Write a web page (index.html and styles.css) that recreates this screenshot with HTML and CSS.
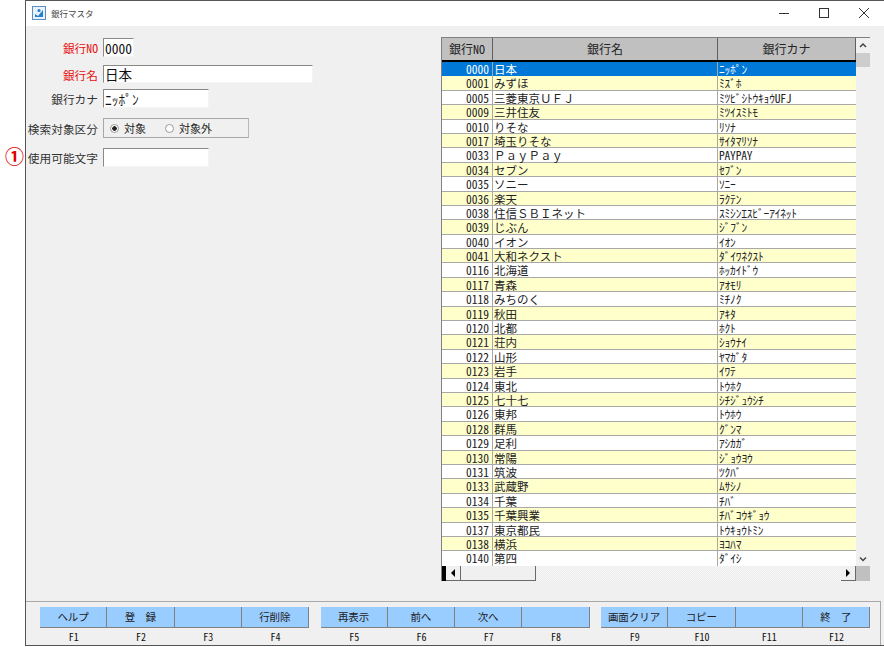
FILE: index.html
```html
<!DOCTYPE html>
<html lang="ja">
<head>
  <meta charset="UTF-8" />
  <title>銀行マスタ</title>
  <link rel="stylesheet" href="styles.css">
</head>
<body>
  <span class="note-mark">①</span>
  <div class="window">
    <header class="titlebar">
      <svg class="app-icon" width="14" height="14" viewBox="0 0 14 14">
        <rect x="0.5" y="0.5" width="13" height="13" fill="#e8f2fb" stroke="#5b8fc4"/>
        <path d="M3 8 L6 10 L11 4 L11 11 L3 11 Z" fill="#2a7fc9"/>
        <circle cx="7" cy="4.5" r="1.6" fill="#2a7fc9"/>
      </svg>
      <span class="title">銀行マスタ</span>
      <div class="controls">
        <svg width="10" height="10" viewBox="0 0 10 10"><path d="M0 5.5H10" stroke="#333" fill="none"/></svg>
        <svg width="10" height="10" viewBox="0 0 10 10"><rect x="0.5" y="0.5" width="9" height="9" stroke="#333" fill="none"/></svg>
        <svg width="10" height="10" viewBox="0 0 10 10"><path d="M0 0L10 10M10 0L0 10" stroke="#333" fill="none"/></svg>
      </div>
    </header>

    <main class="content">
      <section class="form">
        <div class="field no-row">
          <label class="required">銀行NO</label>
          <input class="input w-no" type="text" value="0000">
        </div>
        <div class="field name-row">
          <label class="required">銀行名</label>
          <input class="input w-name" type="text" value="日本">
        </div>
        <div class="field kana-row">
          <label>銀行カナ</label>
          <input class="input w-kana" type="text" value="ﾆｯﾎﾟﾝ">
        </div>
        <div class="field group-row">
          <label>検索対象区分</label>
          <div class="radio-group">
            <span class="radio checked"></span><span class="radio-text">対象</span>
            <span class="radio"></span><span class="radio-text">対象外</span>
          </div>
        </div>
        <div class="field usable-row">
          <label>使用可能文字</label>
          <input class="input w-kana" type="text" value="">
        </div>
      </section>

      <section class="grid">
        <div class="grid-top">
          <div class="grid-body">
            <div class="row head"><div>銀行NO</div><div>銀行名</div><div>銀行カナ</div></div>
            <div class="row selected"><div>0000</div><div>日本</div><div>ﾆｯﾎﾟﾝ</div></div>
            <div class="row alt"><div>0001</div><div>みずほ</div><div>ﾐｽﾞﾎ</div></div>
            <div class="row"><div>0005</div><div>三菱東京ＵＦＪ</div><div>ﾐﾂﾋﾞｼﾄｳｷｮｳUFJ</div></div>
            <div class="row alt"><div>0009</div><div>三井住友</div><div>ﾐﾂｲｽﾐﾄﾓ</div></div>
            <div class="row"><div>0010</div><div>りそな</div><div>ﾘｿﾅ</div></div>
            <div class="row alt"><div>0017</div><div>埼玉りそな</div><div>ｻｲﾀﾏﾘｿﾅ</div></div>
            <div class="row"><div>0033</div><div>ＰａｙＰａｙ</div><div>PAYPAY</div></div>
            <div class="row alt"><div>0034</div><div>セブン</div><div>ｾﾌﾞﾝ</div></div>
            <div class="row"><div>0035</div><div>ソニー</div><div>ｿﾆｰ</div></div>
            <div class="row alt"><div>0036</div><div>楽天</div><div>ﾗｸﾃﾝ</div></div>
            <div class="row"><div>0038</div><div>住信ＳＢＩネット</div><div>ｽﾐｼﾝｴｽﾋﾞｰｱｲﾈｯﾄ</div></div>
            <div class="row alt"><div>0039</div><div>じぶん</div><div>ｼﾞﾌﾞﾝ</div></div>
            <div class="row"><div>0040</div><div>イオン</div><div>ｲｵﾝ</div></div>
            <div class="row alt"><div>0041</div><div>大和ネクスト</div><div>ﾀﾞｲﾜﾈｸｽﾄ</div></div>
            <div class="row"><div>0116</div><div>北海道</div><div>ﾎｯｶｲﾄﾞｳ</div></div>
            <div class="row alt"><div>0117</div><div>青森</div><div>ｱｵﾓﾘ</div></div>
            <div class="row"><div>0118</div><div>みちのく</div><div>ﾐﾁﾉｸ</div></div>
            <div class="row alt"><div>0119</div><div>秋田</div><div>ｱｷﾀ</div></div>
            <div class="row"><div>0120</div><div>北都</div><div>ﾎｸﾄ</div></div>
            <div class="row alt"><div>0121</div><div>荘内</div><div>ｼｮｳﾅｲ</div></div>
            <div class="row"><div>0122</div><div>山形</div><div>ﾔﾏｶﾞﾀ</div></div>
            <div class="row alt"><div>0123</div><div>岩手</div><div>ｲﾜﾃ</div></div>
            <div class="row"><div>0124</div><div>東北</div><div>ﾄｳﾎｸ</div></div>
            <div class="row alt"><div>0125</div><div>七十七</div><div>ｼﾁｼﾞｭｳｼﾁ</div></div>
            <div class="row"><div>0126</div><div>東邦</div><div>ﾄｳﾎｳ</div></div>
            <div class="row alt"><div>0128</div><div>群馬</div><div>ｸﾞﾝﾏ</div></div>
            <div class="row"><div>0129</div><div>足利</div><div>ｱｼｶｶﾞ</div></div>
            <div class="row alt"><div>0130</div><div>常陽</div><div>ｼﾞｮｳﾖｳ</div></div>
            <div class="row"><div>0131</div><div>筑波</div><div>ﾂｸﾊﾞ</div></div>
            <div class="row alt"><div>0133</div><div>武蔵野</div><div>ﾑｻｼﾉ</div></div>
            <div class="row"><div>0134</div><div>千葉</div><div>ﾁﾊﾞ</div></div>
            <div class="row alt"><div>0135</div><div>千葉興業</div><div>ﾁﾊﾞｺｳｷﾞｮｳ</div></div>
            <div class="row"><div>0137</div><div>東京都民</div><div>ﾄｳｷｮｳﾄﾐﾝ</div></div>
            <div class="row alt"><div>0138</div><div>横浜</div><div>ﾖｺﾊﾏ</div></div>
            <div class="row last"><div>0140</div><div>第四</div><div>ﾀﾞｲｼ</div></div>
          </div>
          <div class="vscroll">
            <svg width="14" height="15" viewBox="0 0 14 15"><path d="M4 9L7 6L10 9" stroke="#444" stroke-width="1.5" fill="none"/></svg>
            <div class="vthumb"></div>
            <div class="vtrack"></div>
            <svg width="14" height="14" viewBox="0 0 14 14"><path d="M4 5.5L7 8.5L10 5.5" stroke="#444" stroke-width="1.5" fill="none"/></svg>
          </div>
        </div>
        <div class="hscroll">
          <div class="hblack"></div>
          <div class="hbtn"><svg width="6" height="8" viewBox="0 0 6 8"><path d="M5 0V8L1 4Z" fill="#000"/></svg></div>
          <div class="hthumb"></div>
          <div class="htrack"></div>
          <div class="hbtn"><svg width="6" height="8" viewBox="0 0 6 8"><path d="M1 0V8L5 4Z" fill="#000"/></svg></div>
          <div class="hcorner"></div>
        </div>
      </section>
    </main>

    <footer class="fkeys">
      <div class="fgroup">
        <div class="fkey"><button>ヘルプ</button><span>F1</span></div>
        <div class="fkey"><button>登　録</button><span>F2</span></div>
        <div class="fkey"><button></button><span>F3</span></div>
        <div class="fkey"><button>行削除</button><span>F4</span></div>
      </div>
      <div class="fgroup">
        <div class="fkey"><button>再表示</button><span>F5</span></div>
        <div class="fkey"><button>前へ</button><span>F6</span></div>
        <div class="fkey"><button>次へ</button><span>F7</span></div>
        <div class="fkey"><button></button><span>F8</span></div>
      </div>
      <div class="fgroup">
        <div class="fkey"><button>画面クリア</button><span>F9</span></div>
        <div class="fkey"><button>コピー</button><span>F10</span></div>
        <div class="fkey"><button></button><span>F11</span></div>
        <div class="fkey"><button>終　了</button><span>F12</span></div>
      </div>
    </footer>
  </div>
</body>
</html>
```

FILE: styles.css
```css
/* Base */
html, body {
  margin: 0;
  padding: 0;
  height: 100%;
  background-color: #ffffff;
  overflow: hidden;
}

body {
  font-family: "Noto Sans CJK JP", sans-serif;
  font-size: 12px;
  font-feature-settings: "hwid";
  color: #222222;
  padding-left: 25px;
  box-sizing: border-box;
}

.note-mark {
  position: absolute;
  left: 5px;
  top: 144px;
  font-size: 19px;
  font-weight: bold;
  line-height: 24px;
  color: #e00000;
}

.window {
  display: flex;
  flex-direction: column;
  height: 646px;
  background-color: #f0f0f0;
  border-top: 1px solid #555555;
  border-left: 1px solid #555555;
  border-bottom: 1px solid #555555;
  box-sizing: border-box;
}

/* Title bar */
.titlebar {
  display: flex;
  align-items: center;
  height: 25px;
  flex-shrink: 0;
  background-color: #ffffff;
  padding: 0 15px 2px 6px;
  box-sizing: border-box;
}

.app-icon {
  margin-right: 5px;
}

.title {
  font-size: 8.5px;
  color: #444444;
}

.controls {
  margin-left: auto;
  display: flex;
  gap: 30px;
}

/* Content */
.content {
  display: flex;
  flex: 1;
  min-height: 0;
}

.form {
  width: 415px;
  flex-shrink: 0;
}

.field {
  display: flex;
  align-items: center;
}

.field label {
  width: 72px;
  margin-right: 5px;
  text-align: right;
  white-space: nowrap;
  font-size: 11.7px;
  color: #333333;
}

.field label.required {
  color: #e81010;
}

.no-row { margin-top: 12px; height: 19px; }
.name-row { margin-top: 8px; height: 18px; }
.kana-row { margin-top: 6px; height: 19px; }
.group-row { margin-top: 10px; height: 20px; }
.usable-row { margin-top: 10px; height: 19px; }

.input {
  box-sizing: border-box;
  height: 100%;
  padding: 0 1px;
  font-family: inherit;
  font-feature-settings: inherit;
  font-size: 13.5px;
  color: #111111;
  background-color: #ffffff;
  border: 1px solid #f4f4f4;
  border-top-color: #8a8a8a;
  border-left-color: #8a8a8a;
  outline: none;
}

.w-no { width: 31px; }
.w-name { width: 210px; }
.w-kana { width: 106px; }

.radio-group {
  display: flex;
  align-items: center;
  box-sizing: border-box;
  width: 146px;
  height: 100%;
  padding-left: 6px;
  background-color: #f0f0f0;
  border: 1px solid #a8a8a8;
  border-right-color: #b8b8b8;
}

.radio {
  width: 9px;
  height: 9px;
  box-sizing: border-box;
  border: 1px solid #9a9a9a;
  border-radius: 50%;
  background-color: #ffffff;
  margin-right: 5px;
}

.radio.checked {
  background: radial-gradient(circle, #222222 0 2px, #ffffff 2.5px);
}

.radio-text {
  font-size: 11px;
  margin-right: 19px;
}

/* Grid */
.grid {
  width: 429px;
  height: 544px;
  margin-top: 11px;
  flex-shrink: 0;
  display: flex;
  flex-direction: column;
  border-top: 1px solid #808080;
  border-left: 1px solid #808080;
  box-sizing: border-box;
}

.grid-top {
  display: flex;
  flex: 1;
  min-height: 0;
}

.grid-body {
  width: 414px;
  background-color: #ffffff;
  overflow: hidden;
}

.row {
  display: grid;
  grid-template-columns: 51px 225px 138px;
  height: 14.4px;
  line-height: 14.4px;
  box-sizing: border-box;
  border-bottom: 1px solid #a8a8a8;
  font-size: 11.5px;
  white-space: nowrap;
}

.row > div {
  border-right: 1px solid #a8a8a8;
  padding-left: 1px;
  font-feature-settings: normal;
}

.row > div:first-child {
  text-align: right;
  padding: 0 3px 0 0;
  font-feature-settings: "hwid";
}

.row > div:last-child {
  border-right: none;
  font-size: 11.5px;
  letter-spacing: -0.2px;
  padding-left: 1px;
  font-feature-settings: "hwid";
}

.row.alt { background-color: #ffffcc; }

.row.selected {
  background-color: #0078d7;
  color: #ffffff;
  border-bottom-color: #0078d7;
}

.row.last { border-bottom: none; }

.row.head {
  height: 24px;
  line-height: 21px;
  background-color: #c0c0c0;
  border-bottom: 2px solid #000000;
  color: #222222;
}

.row.head > div {
  text-align: center;
  padding: 0;
  border-right: 1px solid #606060;
  letter-spacing: 0;
  font-size: 12px;
  font-feature-settings: "hwid";
}

.vscroll {
  width: 14px;
  display: flex;
  flex-direction: column;
  background-color: #f0f0f0;
}

.vthumb {
  height: 14px;
  background-color: #cdcdcd;
}

.vtrack { flex: 1; }

.hscroll {
  display: flex;
  height: 15px;
  flex-shrink: 0;
}

.hblack {
  width: 4px;
  background-color: #000000;
}

.hbtn {
  width: 15px;
  display: flex;
  align-items: center;
  justify-content: center;
  box-sizing: border-box;
  background-color: #f0f0f0;
  border-right: 1px solid #696969;
  border-bottom: 1px solid #696969;
}

.hthumb {
  width: 75px;
  box-sizing: border-box;
  background-color: #f0f0f0;
  border-right: 1px solid #696969;
  border-bottom: 1px solid #696969;
}

.htrack {
  flex: 1;
  background-color: #f8f8f8;
  background-image: conic-gradient(#ececec 25%, transparent 0 50%, #ececec 0 75%, transparent 0);
  background-size: 2px 2px;
}

.hcorner {
  width: 14px;
  background-color: #c0c0c0;
}

/* Function keys */
.fkeys {
  display: flex;
  gap: 11.5px;
  height: 44px;
  flex-shrink: 0;
  padding: 5px 0 0 14px;
  margin-right: 3px;
  box-sizing: border-box;
  border-top: 1px solid #a8a8a8;
  border-right: 1px solid #a8a8a8;
}

.fgroup {
  display: flex;
}

.fkey {
  display: flex;
  flex-direction: column;
  align-items: center;
  width: 67.25px;
}

.fkey button {
  width: 100%;
  height: 21px;
  padding: 0;
  font-family: inherit;
  font-size: 10.5px;
  line-height: 18px;
  color: #222222;
  background-color: #99ccff;
  border: none;
  border-right: 1px solid #808080;
  border-bottom: 1px solid #808080;
  box-sizing: border-box;
  white-space: nowrap;
}

.fkey span {
  font-size: 10px;
  line-height: 14px;
  margin-top: 2px;
  color: #111111;
}
```
